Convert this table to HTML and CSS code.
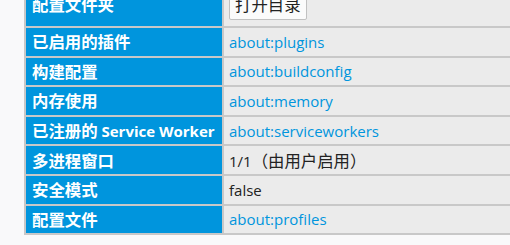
FILE: index.html
```html
<!DOCTYPE html>
<html lang="zh-CN">
<head>
<meta charset="utf-8">
<title>about:support</title>
<link rel="stylesheet" href="styles.css">
</head>
<body>
<div class="page">
  <table class="info">
    <tbody>
      <tr class="top-row">
        <th><span class="zh">配置文件夹</span></th>
        <td><button class="btn" type="button"><span class="zh">打开目录</span></button></td>
      </tr>
      <tr><th><span class="zh">已启用的插件</span></th><td><a href="#">about:plugins</a></td></tr>
      <tr><th><span class="zh">构建配置</span></th><td><a href="#">about:buildconfig</a></td></tr>
      <tr><th><span class="zh">内存使用</span></th><td><a href="#">about:memory</a></td></tr>
      <tr><th><span class="zh">已注册的</span> Service Worker</th><td><a href="#">about:serviceworkers</a></td></tr>
      <tr><th><span class="zh">多进程窗口</span></th><td>1/1<span class="zh">（由用户启用）</span></td></tr>
      <tr><th><span class="zh">安全模式</span></th><td>false</td></tr>
      <tr><th><span class="zh">配置文件</span></th><td><a href="#">about:profiles</a></td></tr>
    </tbody>
  </table>
</div>
</body>
</html>
```

FILE: styles.css
```css
html, body {
  margin: 0;
  padding: 0;
  background: #f9f9fa;
  overflow: hidden;
}

.page {
  padding-left: 24px;
  margin-top: -23px;
  font-family: "Open Sans", "Noto Sans CJK SC", sans-serif;
  font-size: 15px;
  color: #222;
}

.zh {
  font-family: "Noto Sans CJK SC", sans-serif;
  font-size: 16.4px;
  line-height: 18px;
}

.info {
  width: 540px;
  border-collapse: separate;
  border-spacing: 2px;
  background: #c8c8c8;
}

.info th,
.info td {
  box-sizing: border-box;
  height: 27.6px;
  padding: 0 6px;
  line-height: 18px;
  vertical-align: middle;
  white-space: nowrap;
}

.info th {
  width: 196px;
  background: #0095dd;
  color: #fff;
  font-weight: bold;
  text-align: left;
}

.info td {
  background: #ebebeb;
  padding-left: 5px;
}

.info .top-row th,
.info .top-row td {
  vertical-align: baseline;
  padding-top: 10px;
  padding-bottom: 6px;
}

.info a {
  color: #0095dd;
  text-decoration: none;
}

.btn {
  font: inherit;
  font-weight: normal;
  line-height: 18px;
  color: #222;
  background: #fbfbfb;
  border: 1px solid #c1c1c1;
  border-radius: 2px;
  padding: 5px 5px;
  margin: 0;
}
```
